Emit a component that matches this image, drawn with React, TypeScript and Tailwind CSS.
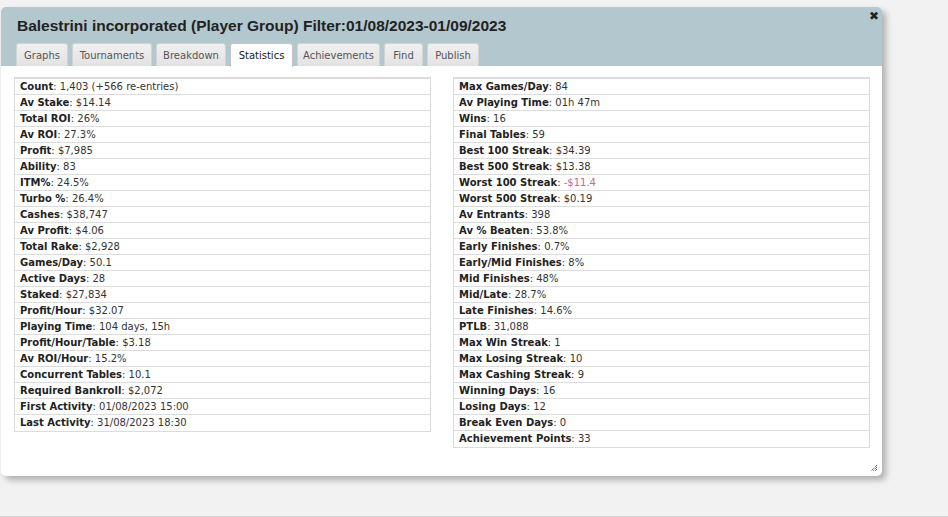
import React from "react";

type Row = { k: string; v: string; neg?: boolean };

const left: Row[] = [
  { k: "Count", v: "1,403 (+566 re-entries)" },
  { k: "Av Stake", v: "$14.14" },
  { k: "Total ROI", v: "26%" },
  { k: "Av ROI", v: "27.3%" },
  { k: "Profit", v: "$7,985" },
  { k: "Ability", v: "83" },
  { k: "ITM%", v: "24.5%" },
  { k: "Turbo %", v: "26.4%" },
  { k: "Cashes", v: "$38,747" },
  { k: "Av Profit", v: "$4.06" },
  { k: "Total Rake", v: "$2,928" },
  { k: "Games/Day", v: "50.1" },
  { k: "Active Days", v: "28" },
  { k: "Staked", v: "$27,834" },
  { k: "Profit/Hour", v: "$32.07" },
  { k: "Playing Time", v: "104 days, 15h" },
  { k: "Profit/Hour/Table", v: "$3.18" },
  { k: "Av ROI/Hour", v: "15.2%" },
  { k: "Concurrent Tables", v: "10.1" },
  { k: "Required Bankroll", v: "$2,072" },
  { k: "First Activity", v: "01/08/2023 15:00" },
  { k: "Last Activity", v: "31/08/2023 18:30" },
];

const right: Row[] = [
  { k: "Max Games/Day", v: "84" },
  { k: "Av Playing Time", v: "01h 47m" },
  { k: "Wins", v: "16" },
  { k: "Final Tables", v: "59" },
  { k: "Best 100 Streak", v: "$34.39" },
  { k: "Best 500 Streak", v: "$13.38" },
  { k: "Worst 100 Streak", v: "-$11.4", neg: true },
  { k: "Worst 500 Streak", v: "$0.19" },
  { k: "Av Entrants", v: "398" },
  { k: "Av % Beaten", v: "53.8%" },
  { k: "Early Finishes", v: "0.7%" },
  { k: "Early/Mid Finishes", v: "8%" },
  { k: "Mid Finishes", v: "48%" },
  { k: "Mid/Late", v: "28.7%" },
  { k: "Late Finishes", v: "14.6%" },
  { k: "PTLB", v: "31,088" },
  { k: "Max Win Streak", v: "1" },
  { k: "Max Losing Streak", v: "10" },
  { k: "Max Cashing Streak", v: "9" },
  { k: "Winning Days", v: "16" },
  { k: "Losing Days", v: "12" },
  { k: "Break Even Days", v: "0" },
  { k: "Achievement Points", v: "33" },
];

const tabs: { t: string; w: string }[] = [
  { t: "Graphs", w: "w-[52px]" },
  { t: "Tournaments", w: "w-[80px]" },
  { t: "Breakdown", w: "w-[70px]" },
  { t: "Statistics", w: "w-[63px]" },
  { t: "Achievements", w: "w-[83px]" },
  { t: "Find", w: "w-[39px]" },
  { t: "Publish", w: "w-[52px]" },
];

function Table({ rows }: { rows: Row[] }) {
  return (
    <div className="w-[417px] border border-[#dcdcdc] border-t-2">
      {rows.map((r, i) => (
        <div
          key={r.k}
          className={`h-[16px] leading-[15px] pl-[5px] text-[10px] whitespace-nowrap ${
            i < rows.length - 1 ? "border-b border-[#dcdcdc]" : ""
          }`}
        >
          <span className="font-bold text-[#222]">{r.k}</span>
          <span className="text-[#333]">: </span>
          <span className={r.neg ? "text-[#c8698a]" : "text-[#333]"}>{r.v}</span>
        </div>
      ))}
    </div>
  );
}

export default function App() {
  return (
    <div
      className="w-[948px] h-[517px] bg-[#f2f2f2] relative overflow-hidden"
      style={{ fontFamily: '"DejaVu Sans", Verdana, sans-serif' }}
    >
      <div className="h-[7px]" />
      <div className="ml-[1px] w-[881px] h-[469px] bg-white rounded-[5px] shadow-[4px_4px_6px_rgba(0,0,0,0.28)] relative flex flex-col">
        <div className="h-[59px] bg-[#b3c7ce] rounded-t-[5px] flex flex-col relative">
          <div
            className="pl-[16px] pt-[9px] text-[15.5px] font-bold text-[#222] leading-[19px]"
            style={{ fontFamily: '"Liberation Sans", Arial, sans-serif' }}
          >
            Balestrini incorporated (Player Group) Filter:01/08/2023-01/09/2023
          </div>
          <div className="mt-auto flex gap-[4px] pl-[15px]">
            {tabs.map(({ t, w }) => {
              const active = t === "Statistics";
              return (
                <div
                  key={t}
                  className={`${w} text-center pt-[5px] text-[10px] leading-[13px] rounded-t-[3px] border border-b-0 ${
                    active
                      ? "bg-white text-[#222] border-[#c5c5c5] h-[24px] -mb-[1px]"
                      : "h-[23px] bg-gradient-to-b from-[#f0f0f0] to-[#e2e2e2] text-[#555] border-[#d3d3d3]"
                  }`}
                >
                  {t}
                </div>
              );
            })}
          </div>
          <div className="absolute right-[3px] top-[3px] text-[12px] leading-[12px] font-bold text-[#222]">✖</div>
        </div>
        <div className="flex items-start gap-[22px] pl-[13px] pt-[11px]">
          <Table rows={left} />
          <Table rows={right} />
        </div>
        <svg className="absolute right-[4px] bottom-[4px]" width="8" height="8" viewBox="0 0 8 8">
          <path d="M7 1 L1 7 M7 3 L3 7 M7 5 L5 7" stroke="#222" strokeWidth="1" strokeDasharray="1 1" />
        </svg>
      </div>
      <div className="absolute left-0 right-0 bottom-0 h-[1px] bg-[#d8d8d8]" />
    </div>
  );
}
